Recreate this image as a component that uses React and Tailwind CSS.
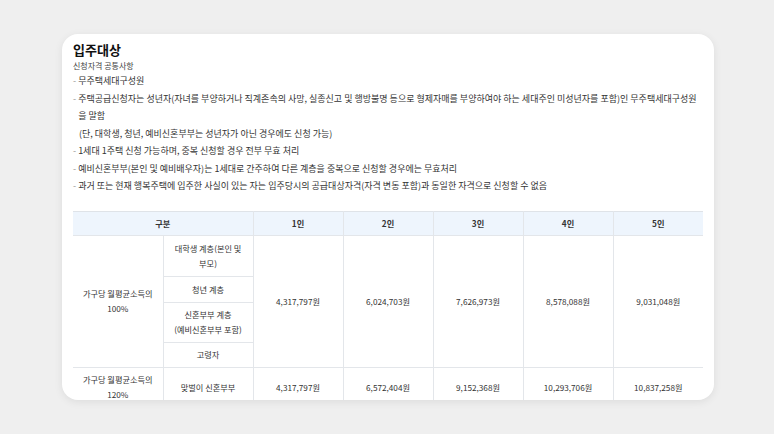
const bullets = [
  "무주택세대구성원",
  "주택공급신청자는 성년자(자녀를 부양하거나 직계존속의 사망, 실종신고 및 행방불명 등으로 형제자매를 부양하여야 하는 세대주인 미성년자를 포함)인 무주택세대구성원을 말함",
  null,
  "1세대 1주택 신청 가능하며, 중복 신청할 경우 전부 무효 처리",
  "예비신혼부부(본인 및 예비배우자)는 1세대로 간주하여 다른 계층을 중복으로 신청할 경우에는 무효처리",
  "과거 또는 현재 행복주택에 입주한 사실이 있는 자는 입주당시의 공급대상자격(자격 변동 포함)과 동일한 자격으로 신청할 수 없음",
];

const row1 = ["4,317,797원", "6,024,703원", "7,626,973원", "8,578,088원", "9,031,048원"];
const row2 = ["4,317,797원", "6,572,404원", "9,152,368원", "10,293,706원", "10,837,258원"];

const td = "border-r border-b border-[#e3e6ea] text-center align-middle px-2";

export default function App() {
  return (
    <div className="h-[434px] w-[774px] bg-[#efefef] pt-[34px] pl-[62px]" style={{ fontFamily: '"Noto Sans CJK KR", "Noto Sans", sans-serif' }}>
      <div className="h-[366px] w-[652px] overflow-hidden rounded-[16px] bg-white px-[11px] pt-[6px] text-[#333] shadow-[0_2px_8px_rgba(0,0,0,0.08)]">
        <h2 className="text-[13px] font-bold leading-[20px] text-[#111]">입주대상</h2>
        <p className="text-[8px] leading-[12px] text-[#444]">신청자격 공통사항</p>
        <div className="pr-[2px] text-[9px] leading-[17.5px] text-[#333]">
          {bullets.map((b, i) =>
            b === null ? (
              <p key={i} className="pl-[6px]">(단, 대학생, 청년, 예비신혼부부는 성년자가 아닌 경우에도 신청 가능)</p>
            ) : (
              <p key={i} className="flex">
                <span className="mr-[2px] text-[#999]">-</span>
                <span>{b}</span>
              </p>
            )
          )}
        </div>
        <table className="mt-[16px] w-[630px] table-fixed border-collapse border-t border-[#dfe3e8] text-[8.2px] text-[#333]">
          <colgroup>
            {[0, 1, 2, 3, 4, 5, 6].map((c) => (
              <col key={c} className="w-[90px]" />
            ))}
          </colgroup>
          <thead>
            <tr className="h-[24px] bg-[#eef5fd] font-bold">
              <th colSpan={2} className={td}>구분</th>
              {["1인", "2인", "3인", "4인", "5인"].map((h, i) => (
                <th key={h} className={i === 4 ? "border-b border-[#e3e6ea]" : td}>{h}</th>
              ))}
            </tr>
          </thead>
          <tbody className="leading-[15px]">
            <tr className="h-[41px]">
              <td rowSpan={4} className={td}>가구당 월평균소득의<br />100%</td>
              <td className={td}>대학생 계층(본인 및<br />부모)</td>
              {row1.map((v, i) => (
                <td key={i} rowSpan={4} className={i === 4 ? "border-b border-[#e3e6ea] text-center" : td}>{v}</td>
              ))}
            </tr>
            <tr className="h-[26px]"><td className={td}>청년 계층</td></tr>
            <tr className="h-[40px]"><td className={td}>신혼부부 계층<br />(예비신혼부부 포함)</td></tr>
            <tr className="h-[25px]"><td className={td}>고령자</td></tr>
            <tr className="h-[40px]">
              <td className={td}>가구당 월평균소득의<br />120%</td>
              <td className={td}>맞벌이 신혼부부</td>
              {row2.map((v, i) => (
                <td key={i} className={i === 4 ? "border-b border-[#e3e6ea] text-center" : td}>{v}</td>
              ))}
            </tr>
          </tbody>
        </table>
      </div>
    </div>
  );
}
